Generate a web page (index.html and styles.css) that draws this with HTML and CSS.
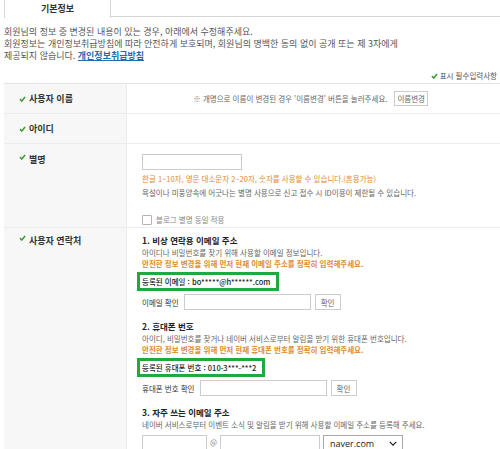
FILE: index.html
```html
<!DOCTYPE html>
<html lang="ko">
<head>
    <meta charset="UTF-8">
    <meta name="viewport" content="width=device-width, initial-scale=1.0">
    <title>회원정보 수정</title>
    <link rel="stylesheet" href="styles.css">
</head>
<body>
    <div class="tabs">
        <div class="tab on">기본정보</div>
    </div>

    <p class="intro">회원님의 정보 중 변경된 내용이 있는 경우, 아래에서 수정해주세요.<br>
    회원정보는 개인정보취급방침에 따라 안전하게 보호되며, 회원님의 명백한 동의 없이 공개 또는 제 3자에게<br>
    제공되지 않습니다. <a href="#">개인정보취급방침</a></p>

    <p class="required"><svg class="chk" viewBox="0 0 8 7"><path d="M1 3.6 L3.2 5.8 L7 1.2"/></svg>표시 필수입력사항</p>

    <div class="form-table">
        <div class="row row-short">
            <div class="th"><svg class="chk" viewBox="0 0 8 7"><path d="M1 3.6 L3.2 5.8 L7 1.2"/></svg>사용자 이름</div>
            <div class="td td-name">
                <span class="note"><span class="mark">&#x203B;&#xFE0E;</span> 개명으로 이름이 변경된 경우 '이름변경' 버튼을 눌러주세요.</span>
                <button class="btn">이름변경</button>
            </div>
        </div>

        <div class="row row-short">
            <div class="th"><svg class="chk" viewBox="0 0 8 7"><path d="M1 3.6 L3.2 5.8 L7 1.2"/></svg>아이디</div>
            <div class="td"></div>
        </div>

        <div class="row row-nick">
            <div class="th"><svg class="chk" viewBox="0 0 8 7"><path d="M1 3.6 L3.2 5.8 L7 1.2"/></svg>별명</div>
            <div class="td">
                <input type="text" class="inp inp-nick">
                <p class="warn">한글 1~10자, 영문 대소문자 2~20자, 숫자를 사용할 수 있습니다.(혼용가능)</p>
                <p class="desc">욕설이나 미풍양속에 어긋나는 별명 사용으로 신고 접수 시 ID이용이 제한될 수 있습니다.</p>
                <label class="check"><span class="box"></span>블로그 별명 동일 적용</label>
            </div>
        </div>

        <div class="row row-contact">
            <div class="th"><svg class="chk" viewBox="0 0 8 7"><path d="M1 3.6 L3.2 5.8 L7 1.2"/></svg>사용자 연락처</div>
            <div class="td">
                <h4>1. 비상 연락용 이메일 주소</h4>
                <p class="desc">아이디나 비밀번호를 찾기 위해 사용할 이메일 정보입니다.</p>
                <p class="warn">안전한 정보 변경을 위해 먼저 현재 이메일 주소를 정확히 입력해주세요.</p>
                <div class="current">등록된 이메일 : bo*****@h******.com</div>
                <div class="field">
                    <span class="label">이메일 확인</span>
                    <input type="text" class="inp inp-confirm">
                    <button class="btn btn-ok">확인</button>
                </div>

                <h4>2. 휴대폰 번호</h4>
                <p class="desc">아이디, 비밀번호를 찾거나 네이버 서비스로부터 알림을 받기 위한 휴대폰 번호입니다.</p>
                <p class="warn">안전한 정보 변경을 위해 먼저 현재 휴대폰 번호를 정확히 입력해주세요.</p>
                <div class="current">등록된 휴대폰 번호 : 010-3***-***2</div>
                <div class="field">
                    <span class="label">휴대폰 번호 확인</span>
                    <input type="text" class="inp inp-confirm">
                    <button class="btn btn-ok">확인</button>
                </div>

                <h4>3. 자주 쓰는 이메일 주소</h4>
                <p class="desc">네이버 서비스로부터 이벤트 소식 및 알림을 받기 위해 사용할 이메일 주소를 등록해 주세요.</p>
                <div class="mail">
                    <input type="text" class="inp inp-id">
                    <span class="at">@</span>
                    <input type="text" class="inp inp-domain">
                    <div class="select">
                        <span>naver.com</span>
                        <svg viewBox="0 0 10 6"><path d="M1 1 L5 5 L9 1"/></svg>
                    </div>
                </div>
            </div>
        </div>
    </div>
</body>
</html>
```

FILE: styles.css
```css
* {
    margin: 0;
    padding: 0;
    box-sizing: border-box;
}
html {
    overflow: hidden;
}
body {
    font-family: "Noto Sans CJK KR", "Noto Sans", sans-serif;
    color: #333;
    background: #fff;
    padding-left: 4px;
}
.tabs {
    display: flex;
    height: 17px;
    border-bottom: 1px solid #d6d6d6;
}
.tab {
    width: 107px;
    height: 18px;
    line-height: 17px;
    text-align: center;
    font-size: 9px;
    font-weight: bold;
    color: #333;
    background: #fff;
    border-left: 1px solid #d6d6d6;
    border-right: 1px solid #d6d6d6;
}
.intro {
    margin-top: 9px;
    font-size: 9px;
    line-height: 12px;
    color: #555;
}
.intro a {
    color: #1f6cb3;
    font-weight: bold;
    text-decoration: underline;
}
.chk {
    width: 7px;
    height: 6px;
    margin-right: 3px;
    fill: none;
    stroke: #3d9b33;
    stroke-width: 1.8;
}
.required {
    margin-top: 8px;
    margin-bottom: 1px;
    padding-right: 3px;
    text-align: right;
    font-size: 7.5px;
    line-height: 12px;
    color: #555;
}
.required .chk {
    margin-right: 2px;
}
.form-table {
    border-top: 1px solid #e3e3e3;
}
.row {
    display: grid;
    grid-template-columns: 123px 1fr;
    border-bottom: 1px solid #ececec;
}
.th {
    background: #f7f7f7;
    border-right: 1px solid #ececec;
    padding-left: 15px;
    font-size: 9px;
    font-weight: bold;
    line-height: 12px;
    color: #333;
    display: flex;
    align-items: center;
}
.td {
    padding-left: 15px;
    font-size: 7.5px;
    color: #333;
}
.row-short {
    height: 30px;
}
.td-name {
    display: flex;
    align-items: center;
    justify-content: flex-end;
    padding-right: 72px;
}
.note {
    color: #666;
    margin-right: 7px;
}
.mark {
    font-family: "Noto Sans CJK KR", sans-serif;
    color: #888;
}
.btn {
    font-family: inherit;
    font-size: 7.5px;
    color: #666;
    background: #fff;
    border: 1px solid #ccc;
    height: 15px;
    padding: 0 2px;
}
.row-nick .th,
.row-contact .th {
    align-items: flex-start;
}
.row-nick {
    height: 84px;
}
.row-nick .th,
.row-nick .td {
    padding-top: 10px;
}
.inp {
    display: block;
    height: 16px;
    border: 1px solid #ccc;
    background: #fff;
}
.inp-nick {
    width: 100px;
}
.warn {
    color: #e08a2d;
    font-weight: bold;
    line-height: 11px;
}
.desc {
    color: #666;
    line-height: 11px;
}
.row-nick .warn {
    margin-top: 3px;
    font-weight: normal;
    line-height: 12px;
}
.row-nick .desc {
    margin-top: 2px;
    line-height: 12px;
}
.check {
    display: flex;
    align-items: center;
    margin-top: 15px;
    line-height: 12px;
    color: #888;
}
.check .box {
    width: 10px;
    height: 10px;
    border: 1px solid #b3b3b3;
    border-radius: 1px;
    margin-right: 4px;
}
.row-contact .th,
.row-contact .td {
    padding-top: 7px;
}
h4 {
    font-size: 8.5px;
    line-height: 11px;
    color: #222;
}
h4 + .desc {
    margin-top: 1px;
}
.current {
    display: inline-block;
    margin: 3px 0 0 -5px;
    padding: 0 6px 0 2px;
    border: 3px solid #22a83c;
    line-height: 13px;
    color: #222;
    font-weight: 500;
}
.field {
    display: flex;
    align-items: center;
    margin-top: 3px;
    margin-bottom: 11px;
}
.label {
    margin-right: 5px;
    color: #333;
}
.inp-confirm {
    width: 127px;
}
.btn-ok {
    width: 26px;
    height: 16px;
    margin-left: 4px;
    padding: 0;
}
.mail {
    display: flex;
    margin-top: 5px;
}
.inp-id {
    width: 65px;
}
.at {
    width: 13px;
    text-align: center;
    color: #888;
    line-height: 14px;
}
.inp-domain {
    width: 100px;
}
.select {
    width: 80px;
    height: 16px;
    margin-left: 3px;
    border: 1px solid #a8a8a8;
    display: flex;
    align-items: center;
    justify-content: space-between;
    padding: 0 5px 0 6px;
    font-family: "Open Sans", "Noto Sans", sans-serif;
    font-size: 9px;
    color: #222;
}
.select svg {
    width: 8px;
    height: 5px;
    fill: none;
    stroke: #222;
    stroke-width: 1.6;
}
```
